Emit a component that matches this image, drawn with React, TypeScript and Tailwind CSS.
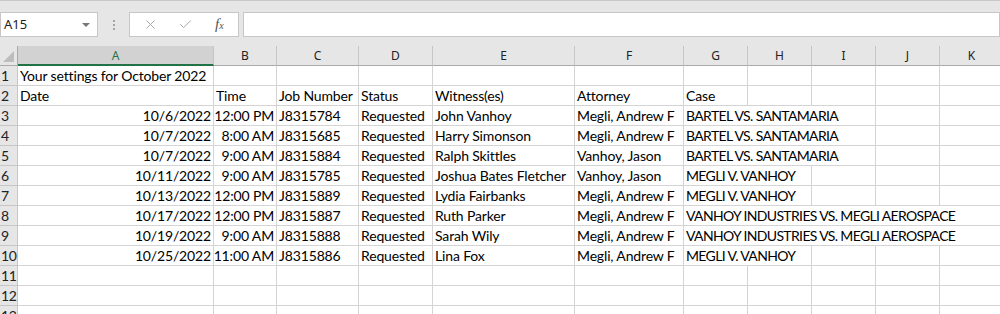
import { X, Check } from 'lucide-react';

type Row = {
  date: string;
  time: string;
  job: string;
  status: string;
  witness: string;
  attorney: string;
  caseName: string;
  span: number;
};

const rows: Row[] = [
  { date: '10/6/2022', time: '12:00 PM', job: 'J8315784', status: 'Requested', witness: 'John Vanhoy', attorney: 'Megli, Andrew F', caseName: 'BARTEL VS. SANTAMARIA', span: 3 },
  { date: '10/7/2022', time: '8:00 AM', job: 'J8315685', status: 'Requested', witness: 'Harry Simonson', attorney: 'Megli, Andrew F', caseName: 'BARTEL VS. SANTAMARIA', span: 3 },
  { date: '10/7/2022', time: '9:00 AM', job: 'J8315884', status: 'Requested', witness: 'Ralph Skittles', attorney: 'Vanhoy, Jason', caseName: 'BARTEL VS. SANTAMARIA', span: 3 },
  { date: '10/11/2022', time: '9:00 AM', job: 'J8315785', status: 'Requested', witness: 'Joshua Bates Fletcher', attorney: 'Vanhoy, Jason', caseName: 'MEGLI V. VANHOY', span: 2 },
  { date: '10/13/2022', time: '12:00 PM', job: 'J8315889', status: 'Requested', witness: 'Lydia Fairbanks', attorney: 'Megli, Andrew F', caseName: 'MEGLI V. VANHOY', span: 2 },
  { date: '10/17/2022', time: '12:00 PM', job: 'J8315887', status: 'Requested', witness: 'Ruth Parker', attorney: 'Megli, Andrew F', caseName: 'VANHOY INDUSTRIES VS. MEGLI AEROSPACE', span: 5 },
  { date: '10/19/2022', time: '9:00 AM', job: 'J8315888', status: 'Requested', witness: 'Sarah Wily', attorney: 'Megli, Andrew F', caseName: 'VANHOY INDUSTRIES VS. MEGLI AEROSPACE', span: 5 },
  { date: '10/25/2022', time: '11:00 AM', job: 'J8315886', status: 'Requested', witness: 'Lina Fox', attorney: 'Megli, Andrew F', caseName: 'MEGLI V. VANHOY', span: 2 },
];

const columns = ['A', 'B', 'C', 'D', 'E', 'F', 'G', 'H', 'I', 'J', 'K'];

const spanClass: Record<number, string> = {
  1: 'col-span-1',
  2: 'col-span-2',
  3: 'col-span-3',
  5: 'col-span-5',
};

const cell = 'border-r border-b border-[#d4d4d4] flex items-end px-[2px] pb-[1px] whitespace-nowrap overflow-hidden';

function RowHead({ n }: { n: number }) {
  return (
    <div className="flex items-center border-r border-b border-[#c6c6c6] bg-[#e6e6e6] pl-[1px] text-[14px] tracking-[-0.4px] text-[#222] overflow-hidden">
      {n}
    </div>
  );
}

function Empty({ count }: { count: number }) {
  return (
    <>
      {Array.from({ length: count }).map((_, i) => (
        <div key={i} className={cell} />
      ))}
    </>
  );
}

export default function App() {
  return (
    <div className="h-[314px] w-[1000px] overflow-hidden bg-white font-['Lato',sans-serif] text-black">
      {/* formula bar */}
      <div className="flex h-[46px] items-start border-t border-[#c8c8c8] bg-[#e6e6e6] pt-[11px]">
        <div className="flex h-[25px] w-[98px] items-center justify-between border border-[#c6c6c6] bg-white pl-[3px] pr-[7px] font-['Noto_Sans',sans-serif] text-[13px] text-[#222]">
          <span>A15</span>
          <span className="h-0 w-0 border-x-[4px] border-t-[4px] border-x-transparent border-t-[#777]" />
        </div>
        <div className="flex h-[25px] w-[31px] flex-col items-center justify-center gap-[2px]">
          <span className="h-[2px] w-[2px] bg-[#a6a6a6]" />
          <span className="h-[2px] w-[2px] bg-[#a6a6a6]" />
          <span className="h-[2px] w-[2px] bg-[#a6a6a6]" />
        </div>
        <div className="flex h-[25px] w-[110px] items-center border border-[#c6c6c6] bg-white pl-[13px]">
          <X className="h-[15px] w-[15px] text-[#a8a8a8]" strokeWidth={1.6} />
          <Check className="ml-[20px] h-[15px] w-[15px] text-[#a8a8a8]" strokeWidth={1.6} />
          <span className="ml-[22px] font-['Liberation_Serif',serif] text-[15px] italic text-[#555]">
            f<span className="text-[10px]">x</span>
          </span>
        </div>
        <div className="ml-[4px] h-[25px] flex-1 border border-[#c6c6c6] bg-white" />
      </div>

      {/* sheet */}
      <div className="grid w-[1068px] auto-rows-[20px] grid-cols-[18px_196px_63px_82px_74px_142px_109px_64px_64px_64px_64px_64px] text-[14px] leading-[17px] tracking-[-0.15px]">
        <div className="relative border-r border-b border-[#ababab] bg-[#e6e6e6]">
          <span className="absolute bottom-[3px] right-[3px] h-0 w-0 border-b-[11px] border-l-[11px] border-b-[#bdbdbd] border-l-transparent" />
        </div>
        {columns.map((c) =>
          c === 'A' ? (
            <div
              key={c}
              className="flex items-center justify-center border-r border-b-2 border-r-[#c6c6c6] border-b-[#217346] bg-[#d2d2d2] font-['Noto_Sans',sans-serif] text-[12px] tracking-normal text-[#217346]"
            >
              {c}
            </div>
          ) : (
            <div
              key={c}
              className="flex items-center justify-center border-r border-b border-r-[#c6c6c6] border-b-[#ababab] bg-[#e6e6e6] font-['Noto_Sans',sans-serif] text-[12px] tracking-normal text-[#222]"
            >
              {c}
            </div>
          )
        )}

        <RowHead n={1} />
        <div className={cell}>Your settings for October 2022</div>
        <Empty count={10} />

        <RowHead n={2} />
        <div className={cell}>Date</div>
        <div className={cell}>Time</div>
        <div className={cell}>Job Number</div>
        <div className={cell}>Status</div>
        <div className={cell}>Witness(es)</div>
        <div className={cell}>Attorney</div>
        <div className={cell}>Case</div>
        <Empty count={4} />

        {rows.map((r, i) => (
          <div key={i} className="contents">
            <RowHead n={i + 3} />
            <div className={`${cell} justify-end`}>{r.date}</div>
            <div className={`${cell} justify-end pl-0`}>{r.time}</div>
            <div className={cell}>{r.job}</div>
            <div className={cell}>{r.status}</div>
            <div className={cell}>{r.witness}</div>
            <div className={cell}>{r.attorney}</div>
            <div className={`${cell} ${spanClass[r.span]} tracking-[-0.65px]`}>{r.caseName}</div>
            <Empty count={5 - r.span} />
          </div>
        ))}

        {[11, 12, 13].map((n) => (
          <div key={n} className="contents">
            <RowHead n={n} />
            <Empty count={11} />
          </div>
        ))}
      </div>
    </div>
  );
}
